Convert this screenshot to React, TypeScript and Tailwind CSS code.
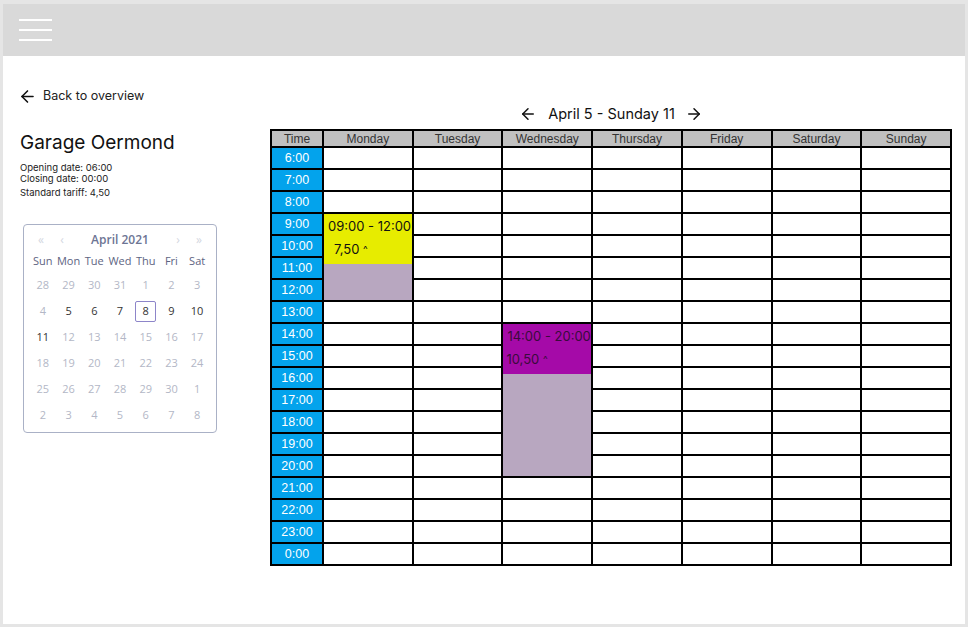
import { ArrowLeft, ArrowRight } from "lucide-react";

const hours = [
  "6:00", "7:00", "8:00", "9:00", "10:00", "11:00", "12:00", "13:00", "14:00", "15:00",
  "16:00", "17:00", "18:00", "19:00", "20:00", "21:00", "22:00", "23:00", "0:00",
];
const days = ["Monday", "Tuesday", "Wednesday", "Thursday", "Friday", "Saturday", "Sunday"];

interface Booking {
  day: number;
  start: number;
  span: number;
  time: string;
  price: string;
  head: string;
  text: string;
  indent: string;
}

const bookings: Booking[] = [
  { day: 0, start: 3, span: 4, time: "09:00 - 12:00", price: "7,50", head: "bg-[#e7ec00]", text: "text-[#111]", indent: "pl-[10px]" },
  { day: 2, start: 8, span: 7, time: "14:00 - 20:00", price: "10,50", head: "bg-[#a50aa8]", text: "text-[#3a0b3c]", indent: "pl-[3px]" },
];

const weeks = [
  [28, 29, 30, 31, 1, 2, 3],
  [4, 5, 6, 7, 8, 9, 10],
  [11, 12, 13, 14, 15, 16, 17],
  [18, 19, 20, 21, 22, 23, 24],
  [25, 26, 27, 28, 29, 30, 1],
  [2, 3, 4, 5, 6, 7, 8],
];

function MiniCalendar() {
  return (
    <div className="w-[194px] h-[209px] border border-[#aab1c6] rounded-[4px] px-[6px] pt-[6px] font-['Open_Sans',sans-serif]">
      <div className="flex items-center h-[18px] text-[#d3d7e1] text-[12px]">
        <span className="w-[22px] text-center">«</span>
        <span className="w-[20px] text-center">‹</span>
        <span className="flex-1 text-center text-[12px] font-semibold text-[#6d7594]">April 2021</span>
        <span className="w-[20px] text-center">›</span>
        <span className="w-[22px] text-center">»</span>
      </div>
      <div className="grid grid-cols-7 mt-[4px] text-[11px] text-[#5d6482]">
        {["Sun", "Mon", "Tue", "Wed", "Thu", "Fri", "Sat"].map((d) => (
          <div key={d} className="h-[16px] flex items-center justify-center">{d}</div>
        ))}
      </div>
      <div className="grid grid-cols-7 mt-[3px] text-[11px]">
        {weeks.map((w, wi) =>
          w.map((d, di) => {
            const current = wi === 1 ? d >= 5 : wi === 2 && d === 11;
            const selected = wi === 1 && d === 8;
            return (
              <div key={`${wi}-${di}`} className="h-[26px] flex items-center justify-center">
                <span
                  className={
                    "w-[21px] h-[21px] flex items-center justify-center rounded-[2px] " +
                    (selected ? "border border-[#8d85c9] " : "") +
                    (current ? "text-[#333333]" : "text-[#b3b7c6]")
                  }
                >
                  {d}
                </span>
              </div>
            );
          })
        )}
      </div>
    </div>
  );
}

function WeekTable() {
  return (
    <div
      className="grid grid-cols-[50px_repeat(7,1fr)] grid-rows-[15px_repeat(19,20px)] gap-[2px] p-[2px] bg-black w-[682px] font-['Liberation_Sans',Arial,sans-serif] text-[12px]"
    >
      <div className="bg-[#c0c0c0] text-[#333] flex items-center justify-center leading-none">Time</div>
      {days.map((d) => (
        <div key={d} className="bg-[#c0c0c0] text-[#333] flex items-center justify-center leading-none">{d}</div>
      ))}
      {hours.map((h, r) => (
        <div key={h} className="contents">
          <div
            className="bg-[#03a3ec] text-white flex items-center justify-center text-[12.5px]"
            style={{ gridRow: r + 2, gridColumn: 1 }}
          >
            {h}
          </div>
          {days.map((d, c) => {
            const covered = bookings.some((b) => b.day === c && r >= b.start && r < b.start + b.span);
            if (covered) return null;
            return <div key={d} className="bg-white" style={{ gridRow: r + 2, gridColumn: c + 2 }} />;
          })}
        </div>
      ))}
      {bookings.map((b) => (
        <div
          key={b.time}
          className="flex flex-col bg-[#b8a7c0] font-['Inter',sans-serif]"
          style={{ gridColumn: b.day + 2, gridRow: `${b.start + 2} / span ${b.span}` }}
        >
          <div className={`h-[50px] ${b.head} ${b.text} text-[13px] flex flex-col`}>
            <div className="pl-[4px] pt-[2px] h-[23px] leading-[20px]">{b.time}</div>
            <div className={`${b.indent} pt-[1px] leading-[22px]`}>
              {b.price} <span className="text-[10px] align-top">^</span>
            </div>
          </div>
        </div>
      ))}
    </div>
  );
}

export default function App() {
  return (
    <div className="w-[968px] h-[627px] bg-[#e5e5e5] pt-[4px] px-[3px] pb-[3px] font-['Inter',sans-serif]">
      <div className="w-full h-full bg-white flex flex-col">
        <div className="h-[52px] bg-[#d9d9d9] pl-[16px] pt-[15px] flex flex-col gap-[8px]">
          <div className="w-[33px] h-[2px] bg-white" />
          <div className="w-[33px] h-[2px] bg-white" />
          <div className="w-[33px] h-[2px] bg-white" />
        </div>
        <div className="flex pl-[16px]">
          <div className="w-[251px] flex flex-col">
            <div className="mt-[32px] flex items-center gap-[6px] h-[16px] text-[12.5px] text-[#222]">
              <ArrowLeft size={19} strokeWidth={2} className="text-[#111] -ml-[1px]" />
              <span>Back to overview</span>
            </div>
            <div className="mt-[27px] ml-[1px] text-[19px] leading-[24px] text-[#111]">Garage Oermond</div>
            <div className="mt-[7px] ml-[1px] text-[9.5px] leading-[11px] text-[#222]">
              <div>Opening date: 06:00</div>
              <div>Closing date: 00:00</div>
              <div className="mt-[3px]">Standard tariff: 4,50</div>
            </div>
            <div className="mt-[26px] ml-[4px]">
              <MiniCalendar />
            </div>
          </div>
          <div className="flex flex-col">
            <div className="mt-[48px] h-[20px] flex items-center justify-center gap-[11px] text-[14.5px] text-[#111]">
              <ArrowLeft size={18} strokeWidth={2} />
              <span>April 5 - Sunday 11</span>
              <ArrowRight size={18} strokeWidth={2} className="-ml-[1px]" />
            </div>
            <div className="mt-[5px]">
              <WeekTable />
            </div>
          </div>
        </div>
      </div>
    </div>
  );
}
